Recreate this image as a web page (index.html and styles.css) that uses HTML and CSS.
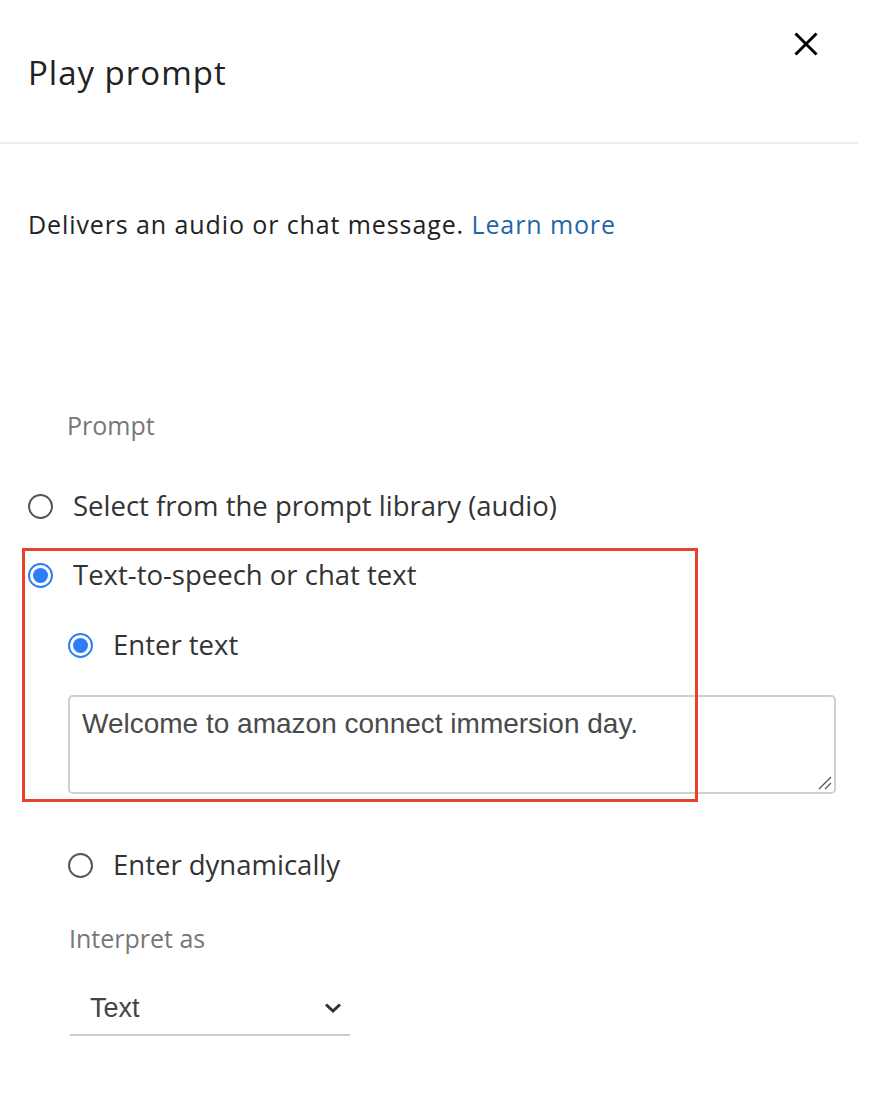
FILE: index.html
```html
<!DOCTYPE html>
<html>
<head>
<meta charset="utf-8">
<link rel="stylesheet" href="styles.css">
</head>
<body>
<div class="panel">
  <header class="head">
    <h1 class="title">Play prompt</h1>
    <button class="close" aria-label="Close">
      <svg width="24" height="24" viewBox="0 0 24 24"><path d="M1.5 1.5 L22.5 22.5 M22.5 1.5 L1.5 22.5" stroke="#000" stroke-width="3" fill="none"/></svg>
    </button>
  </header>
  <div class="body">
    <p class="desc">Delivers an audio or chat message. <a href="#" class="link">Learn more</a></p>
    <div class="label prompt-label">Prompt</div>
    <div class="opt opt-lib">
      <span class="radio"></span><span class="opt-text">Select from the prompt library (audio)</span>
    </div>
    <div class="opt opt-tts">
      <span class="radio on"></span><span class="opt-text">Text-to-speech or chat text</span>
    </div>
    <div class="sub">
      <div class="opt opt-enter">
        <span class="radio on"></span><span class="opt-text">Enter text</span>
      </div>
      <div class="textarea">
        <span class="ta-text">Welcome to amazon connect immersion day.</span>
        <svg class="grip" width="14" height="14" viewBox="0 0 14 14"><path d="M1 13 L13 1 M7 13 L13 7" stroke="#555" stroke-width="1.3"/></svg>
      </div>
      <div class="opt opt-dyn">
        <span class="radio"></span><span class="opt-text">Enter dynamically</span>
      </div>
      <div class="label interp">Interpret as</div>
      <div class="select">
        <span class="sel-text">Text</span>
        <svg width="18" height="12" viewBox="0 0 18 12"><path d="M2 2.5 L9 9 L16 2.5" stroke="#333" stroke-width="3" fill="none"/></svg>
      </div>
    </div>
  </div>
  <div class="highlight"></div>
</div>
</body>
</html>
```
FILE: styles.css
```css
* { box-sizing: border-box; }
html, body { margin: 0; padding: 0; background: #fff; }
body { font-family: "Open Sans", "Noto Sans", sans-serif; color: #333; }
.panel { width: 858px; position: relative; }
.head {
  height: 144px;
  border-bottom: 2px solid #eceded;
  display: flex;
  align-items: flex-start;
  justify-content: space-between;
  padding: 0 0 0 28px;
}
.title {
  margin: 51px 0 0 0;
  font-family: "Open Sans", "Noto Sans", sans-serif;
  font-weight: 400;
  font-size: 33px;
  line-height: 44px;
  color: #222;
  letter-spacing: 1px;
}
.close {
  margin: 32px 40px 0 0;
  width: 24px; height: 24px;
  padding: 0; border: 0; background: none;
  display: block;
}
.close svg { display: block; }
.body { padding: 0 0 0 28px; }
.desc {
  margin: 62px 0 0 0;
  font-family: "Open Sans", "Noto Sans", sans-serif;
  font-size: 25px;
  line-height: 36px;
  color: #222;
  letter-spacing: 0.9px;
}
.link { color: #1f67a8; text-decoration: none; }
.label {
  font-size: 25px;
  line-height: 30px;
  color: #777;
}
.prompt-label { margin: 168px 0 0 39px; }
.opt {
  display: flex;
  align-items: center;
  height: 36px;
}
.opt-text { font-size: 27.5px; line-height: 36px; color: #333; margin-left: 20px; }
.opt-lib { margin-top: 48px; }
.opt-tts { margin-top: 33px; }
.radio {
  width: 25px; height: 25px;
  border-radius: 50%;
  border: 2px solid #555;
  flex: none;
  position: relative;
  background: #fff;
}
.radio.on { border: 2.5px solid #2f7df6; }
.radio.on::after {
  content: "";
  position: absolute;
  left: 3px; top: 3px; right: 3px; bottom: 3px;
  border-radius: 50%;
  background: #2f7df6;
}
.highlight {
  position: absolute;
  left: 22px;
  top: 548px;
  width: 676px;
  height: 254px;
  border: 3px solid #e8412e;
  pointer-events: none;
}
.sub { padding-left: 40px; }
.opt-enter { margin-top: 34px; }
.textarea {
  margin-top: 32px;
  width: 768px;
  height: 99px;
  border: 2px solid #cfcfcf;
  border-radius: 5px;
  position: relative;
  padding: 9px 12px;
}
.ta-text {
  font-family: "Liberation Sans", Arial, sans-serif;
  font-size: 28px;
  line-height: 36px;
  color: #4a4a4a;
}
.grip { position: absolute; right: 2px; bottom: 2px; }
.opt-dyn { margin-top: 53px; }
.interp { margin-top: 40px; margin-left: 1px; }
.select {
  margin: 37px 0 0 2px;
  width: 280px;
  height: 46px;
  border-bottom: 2px solid #ccc;
  display: flex;
  align-items: center;
  justify-content: space-between;
  padding: 0 8px 8px 20px;
}
.sel-text {
  font-family: "Liberation Sans", Arial, sans-serif;
  font-size: 27px;
  color: #444;
}
```
